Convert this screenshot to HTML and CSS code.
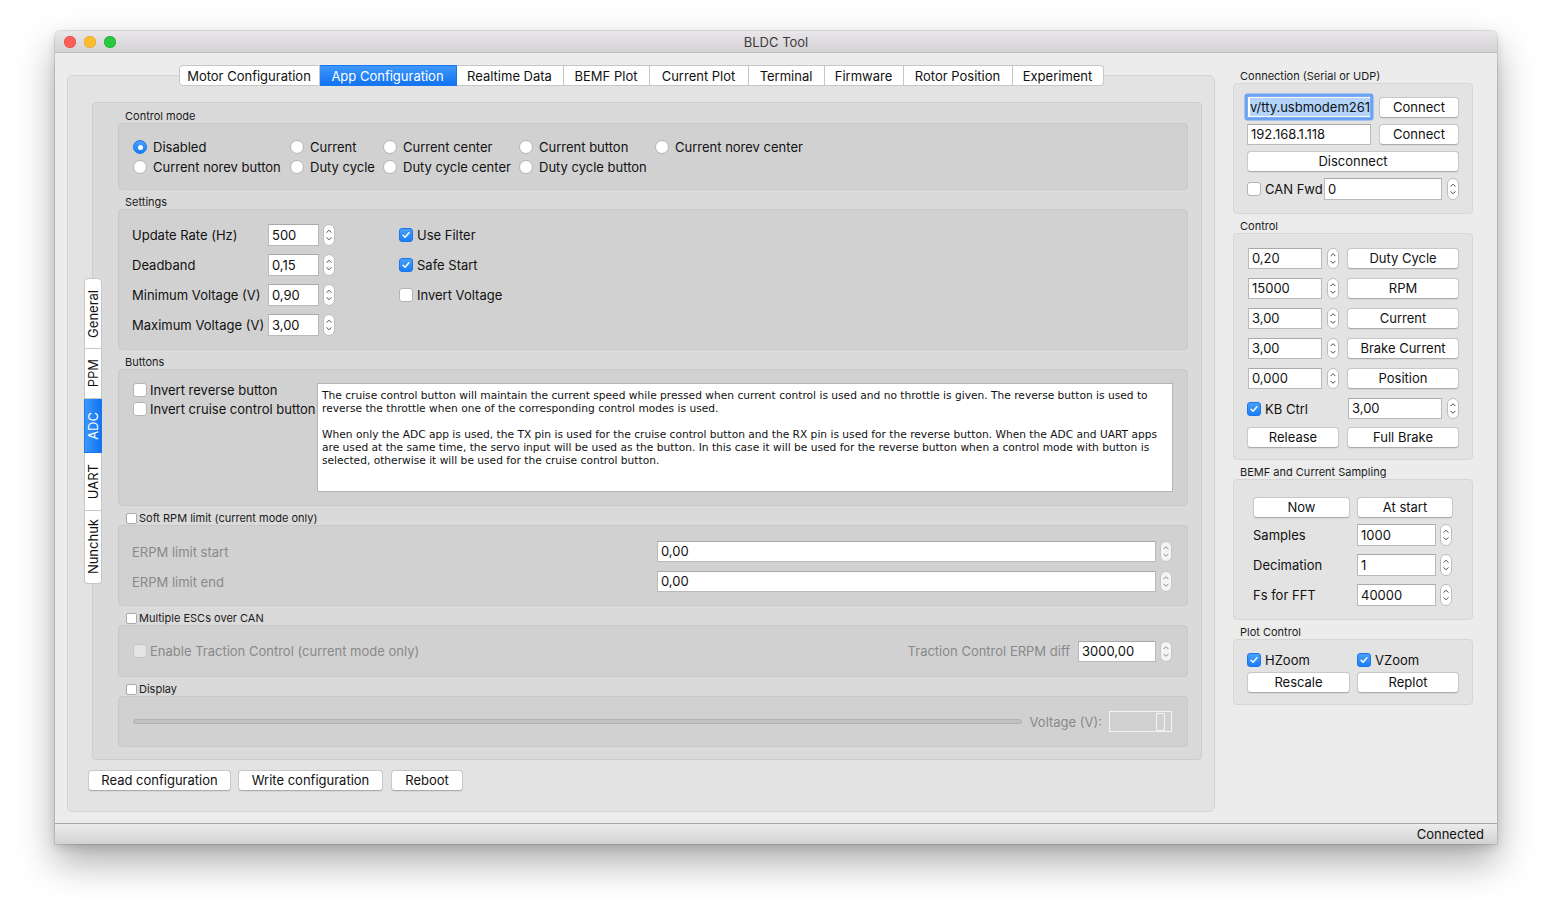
FILE: index.html
```html
<!DOCTYPE html>
<html>
<head>
<meta charset="utf-8">
<title>BLDC Tool</title>
<link rel="stylesheet" href="styles.css">
</head>
<body>
<div class="window">
  <div class="titlebar">
    <div class="lights"><span class="light red"></span><span class="light yellow"></span><span class="light green"></span></div>
    <div class="title">BLDC Tool</div>
    <div></div>
  </div>
  <div class="content">
    <div class="maincol">
      <div class="tabbar">
        <div class="tab">Motor Configuration</div>
        <div class="tab sel">App Configuration</div>
        <div class="tab">Realtime Data</div>
        <div class="tab">BEMF Plot</div>
        <div class="tab">Current Plot</div>
        <div class="tab">Terminal</div>
        <div class="tab">Firmware</div>
        <div class="tab">Rotor Position</div>
        <div class="tab">Experiment</div>
      </div>
      <div class="mainpane">
        <div class="inner">
          <div class="vtabs">
            <div class="vtab"><span>General</span></div>
            <div class="vtab"><span>PPM</span></div>
            <div class="vtab sel"><span>ADC</span></div>
            <div class="vtab"><span>UART</span></div>
            <div class="vtab"><span>Nunchuk</span></div>
          </div>
          <div class="innerpane">
            <div class="gtitle">Control mode</div>
            <div class="gbox cm">
              <label class="opt"><span class="radio on"></span>Disabled</label>
              <label class="opt"><span class="radio"></span>Current</label>
              <label class="opt"><span class="radio"></span>Current center</label>
              <label class="opt"><span class="radio"></span>Current button</label>
              <label class="opt"><span class="radio"></span>Current norev center</label>
              <label class="opt"><span class="radio"></span>Current norev button</label>
              <label class="opt"><span class="radio"></span>Duty cycle</label>
              <label class="opt"><span class="radio"></span>Duty cycle center</label>
              <label class="opt"><span class="radio"></span>Duty cycle button</label>
            </div>

            <div class="gtitle">Settings</div>
            <div class="gbox settings">
              <div class="lbl">Update Rate (Hz)</div>
              <div class="spinbox sb-set"><div class="field">500</div><svg class="spin" width="12" height="22" viewBox="0 0 12 22"><rect x=".5" y=".5" width="11" height="21" rx="5.5" fill="#fff" stroke="#bcbcbc"/><path d="M3.6 8.6 6 6.2l2.4 2.4M3.6 13.4 6 15.8l2.4-2.4" fill="none" stroke="#4a4a4a"/></svg></div>
              <label class="opt"><span class="cb on"><svg width="14" height="14" viewBox="0 0 14 14"><path d="M3.6 7.3l2.3 2.4 4.5-5.3" fill="none" stroke="#fff" stroke-width="1.7" stroke-linecap="round" stroke-linejoin="round"/></svg></span>Use Filter</label>
              <div class="lbl">Deadband</div>
              <div class="spinbox sb-set"><div class="field">0,15</div><svg class="spin" width="12" height="22" viewBox="0 0 12 22"><rect x=".5" y=".5" width="11" height="21" rx="5.5" fill="#fff" stroke="#bcbcbc"/><path d="M3.6 8.6 6 6.2l2.4 2.4M3.6 13.4 6 15.8l2.4-2.4" fill="none" stroke="#4a4a4a"/></svg></div>
              <label class="opt"><span class="cb on"><svg width="14" height="14" viewBox="0 0 14 14"><path d="M3.6 7.3l2.3 2.4 4.5-5.3" fill="none" stroke="#fff" stroke-width="1.7" stroke-linecap="round" stroke-linejoin="round"/></svg></span>Safe Start</label>
              <div class="lbl">Minimum Voltage (V)</div>
              <div class="spinbox sb-set"><div class="field">0,90</div><svg class="spin" width="12" height="22" viewBox="0 0 12 22"><rect x=".5" y=".5" width="11" height="21" rx="5.5" fill="#fff" stroke="#bcbcbc"/><path d="M3.6 8.6 6 6.2l2.4 2.4M3.6 13.4 6 15.8l2.4-2.4" fill="none" stroke="#4a4a4a"/></svg></div>
              <label class="opt"><span class="cb"></span>Invert Voltage</label>
              <div class="lbl">Maximum Voltage (V)</div>
              <div class="spinbox sb-set"><div class="field">3,00</div><svg class="spin" width="12" height="22" viewBox="0 0 12 22"><rect x=".5" y=".5" width="11" height="21" rx="5.5" fill="#fff" stroke="#bcbcbc"/><path d="M3.6 8.6 6 6.2l2.4 2.4M3.6 13.4 6 15.8l2.4-2.4" fill="none" stroke="#4a4a4a"/></svg></div>
              <div></div>
            </div>

            <div class="gtitle">Buttons</div>
            <div class="gbox buttons">
              <div class="btnchecks">
                <label class="opt"><span class="cb"></span>Invert reverse button</label>
                <label class="opt"><span class="cb"></span>Invert cruise control button</label>
              </div>
              <div class="textarea">The cruise control button will maintain the current speed while pressed when current control is used and no throttle is given. The reverse button is used to<br>reverse the throttle when one of the corresponding control modes is used.<br><br>When only the ADC app is used, the TX pin is used for the cruise control button and the RX pin is used for the reverse button. When the ADC and UART apps<br>are used at the same time, the servo input will be used as the button. In this case it will be used for the reverse button when a control mode with button is<br>selected, otherwise it will be used for the cruise control button.</div>
            </div>

            <div class="gtitle chk"><span class="cbs"></span>Soft RPM limit (current mode only)</div>
            <div class="gbox soft">
              <div class="lbl dis">ERPM limit start</div>
              <div class="spinbox"><div class="field wide">0,00</div><svg class="spin" width="12" height="21" viewBox="0 0 12 21"><rect x=".5" y=".5" width="11" height="20" rx="5.5" fill="#f4f4f4" stroke="#c6c6c6"/><path d="M3.6 8.1 6 5.7l2.4 2.4M3.6 12.9 6 15.3l2.4-2.4" fill="none" stroke="#8a8a8a"/></svg></div>
              <div class="lbl dis">ERPM limit end</div>
              <div class="spinbox"><div class="field wide">0,00</div><svg class="spin" width="12" height="21" viewBox="0 0 12 21"><rect x=".5" y=".5" width="11" height="20" rx="5.5" fill="#f4f4f4" stroke="#c6c6c6"/><path d="M3.6 8.1 6 5.7l2.4 2.4M3.6 12.9 6 15.3l2.4-2.4" fill="none" stroke="#8a8a8a"/></svg></div>
            </div>

            <div class="gtitle chk"><span class="cbs"></span>Multiple ESCs over CAN</div>
            <div class="gbox multi">
              <label class="opt dis"><span class="cb dis"></span>Enable Traction Control (current mode only)</label>
              <div class="tcright">
                <span class="dis">Traction Control ERPM diff</span>
                <div class="spinbox"><div class="field tc">3000,00</div><svg class="spin" width="12" height="21" viewBox="0 0 12 21"><rect x=".5" y=".5" width="11" height="20" rx="5.5" fill="#f4f4f4" stroke="#c6c6c6"/><path d="M3.6 8.1 6 5.7l2.4 2.4M3.6 12.9 6 15.3l2.4-2.4" fill="none" stroke="#8a8a8a"/></svg></div>
              </div>
            </div>

            <div class="gtitle chk"><span class="cbs"></span>Display</div>
            <div class="gbox display">
              <div class="track"></div>
              <span class="dis vlabel">Voltage (V):</span>
              <div class="lcd"><div class="lcdseg"></div></div>
            </div>
          </div>
        </div>
        <div class="bottombtns">
          <div class="btn b-read">Read configuration</div>
          <div class="btn b-write">Write configuration</div>
          <div class="btn b-reboot">Reboot</div>
        </div>
      </div>
    </div>

    <div class="side">
      <div class="stitle first">Connection (Serial or UDP)</div>
      <div class="sbox conn">
        <div class="row r-c1">
          <div class="field focus"><span class="selected">v/tty.usbmodem261</span></div>
          <div class="btn">Connect</div>
        </div>
        <div class="row r-c2">
          <div class="field ip">192.168.1.118</div>
          <div class="btn">Connect</div>
        </div>
        <div class="btn full">Disconnect</div>
        <div class="row r-can">
          <label class="opt"><span class="cb"></span>CAN Fwd</label>
          <div class="spinbox"><div class="field canf">0</div><svg class="spin" width="12" height="22" viewBox="0 0 12 22"><rect x=".5" y=".5" width="11" height="21" rx="5.5" fill="#fff" stroke="#bcbcbc"/><path d="M3.6 8.6 6 6.2l2.4 2.4M3.6 13.4 6 15.8l2.4-2.4" fill="none" stroke="#4a4a4a"/></svg></div>
        </div>
      </div>

      <div class="stitle">Control</div>
      <div class="sbox control">
        <div class="spinbox"><div class="field cf">0,20</div><svg class="spin" width="12" height="21" viewBox="0 0 12 21"><rect x=".5" y=".5" width="11" height="20" rx="5.5" fill="#fff" stroke="#bcbcbc"/><path d="M3.6 8.1 6 5.7l2.4 2.4M3.6 12.9 6 15.3l2.4-2.4" fill="none" stroke="#4a4a4a"/></svg></div>
        <div class="btn">Duty Cycle</div>
        <div class="spinbox"><div class="field cf">15000</div><svg class="spin" width="12" height="21" viewBox="0 0 12 21"><rect x=".5" y=".5" width="11" height="20" rx="5.5" fill="#fff" stroke="#bcbcbc"/><path d="M3.6 8.1 6 5.7l2.4 2.4M3.6 12.9 6 15.3l2.4-2.4" fill="none" stroke="#4a4a4a"/></svg></div>
        <div class="btn">RPM</div>
        <div class="spinbox"><div class="field cf">3,00</div><svg class="spin" width="12" height="21" viewBox="0 0 12 21"><rect x=".5" y=".5" width="11" height="20" rx="5.5" fill="#fff" stroke="#bcbcbc"/><path d="M3.6 8.1 6 5.7l2.4 2.4M3.6 12.9 6 15.3l2.4-2.4" fill="none" stroke="#4a4a4a"/></svg></div>
        <div class="btn">Current</div>
        <div class="spinbox"><div class="field cf">3,00</div><svg class="spin" width="12" height="21" viewBox="0 0 12 21"><rect x=".5" y=".5" width="11" height="20" rx="5.5" fill="#fff" stroke="#bcbcbc"/><path d="M3.6 8.1 6 5.7l2.4 2.4M3.6 12.9 6 15.3l2.4-2.4" fill="none" stroke="#4a4a4a"/></svg></div>
        <div class="btn">Brake Current</div>
        <div class="spinbox"><div class="field cf">0,000</div><svg class="spin" width="12" height="21" viewBox="0 0 12 21"><rect x=".5" y=".5" width="11" height="20" rx="5.5" fill="#fff" stroke="#bcbcbc"/><path d="M3.6 8.1 6 5.7l2.4 2.4M3.6 12.9 6 15.3l2.4-2.4" fill="none" stroke="#4a4a4a"/></svg></div>
        <div class="btn">Position</div>
        <label class="opt"><span class="cb on"><svg width="14" height="14" viewBox="0 0 14 14"><path d="M3.6 7.3l2.3 2.4 4.5-5.3" fill="none" stroke="#fff" stroke-width="1.7" stroke-linecap="round" stroke-linejoin="round"/></svg></span>KB Ctrl</label>
        <div class="spinbox"><div class="field kb">3,00</div><svg class="spin" width="12" height="21" viewBox="0 0 12 21"><rect x=".5" y=".5" width="11" height="20" rx="5.5" fill="#fff" stroke="#bcbcbc"/><path d="M3.6 8.1 6 5.7l2.4 2.4M3.6 12.9 6 15.3l2.4-2.4" fill="none" stroke="#4a4a4a"/></svg></div>
        <div class="btn">Release</div>
        <div class="btn">Full Brake</div>
      </div>

      <div class="stitle">BEMF and Current Sampling</div>
      <div class="sbox bemf">
        <div class="bemf-btns">
          <div class="btn">Now</div>
          <div class="btn">At start</div>
        </div>
        <div class="bemf-grid">
          <div class="lbl">Samples</div>
          <div class="spinbox"><div class="field bf">1000</div><svg class="spin" width="12" height="22" viewBox="0 0 12 22"><rect x=".5" y=".5" width="11" height="21" rx="5.5" fill="#fff" stroke="#bcbcbc"/><path d="M3.6 8.6 6 6.2l2.4 2.4M3.6 13.4 6 15.8l2.4-2.4" fill="none" stroke="#4a4a4a"/></svg></div>
          <div class="lbl">Decimation</div>
          <div class="spinbox"><div class="field bf">1</div><svg class="spin" width="12" height="22" viewBox="0 0 12 22"><rect x=".5" y=".5" width="11" height="21" rx="5.5" fill="#fff" stroke="#bcbcbc"/><path d="M3.6 8.6 6 6.2l2.4 2.4M3.6 13.4 6 15.8l2.4-2.4" fill="none" stroke="#4a4a4a"/></svg></div>
          <div class="lbl">Fs for FFT</div>
          <div class="spinbox"><div class="field bf">40000</div><svg class="spin" width="12" height="22" viewBox="0 0 12 22"><rect x=".5" y=".5" width="11" height="21" rx="5.5" fill="#fff" stroke="#bcbcbc"/><path d="M3.6 8.6 6 6.2l2.4 2.4M3.6 13.4 6 15.8l2.4-2.4" fill="none" stroke="#4a4a4a"/></svg></div>
        </div>
      </div>

      <div class="stitle">Plot Control</div>
      <div class="sbox plot">
        <label class="opt"><span class="cb on"><svg width="14" height="14" viewBox="0 0 14 14"><path d="M3.6 7.3l2.3 2.4 4.5-5.3" fill="none" stroke="#fff" stroke-width="1.7" stroke-linecap="round" stroke-linejoin="round"/></svg></span>HZoom</label>
        <label class="opt"><span class="cb on"><svg width="14" height="14" viewBox="0 0 14 14"><path d="M3.6 7.3l2.3 2.4 4.5-5.3" fill="none" stroke="#fff" stroke-width="1.7" stroke-linecap="round" stroke-linejoin="round"/></svg></span>VZoom</label>
        <div class="btn">Rescale</div>
        <div class="btn">Replot</div>
      </div>
    </div>
  </div>
  <div class="status">Connected</div>
</div>
</body>
</html>
```

FILE: styles.css
```css
* { box-sizing: border-box; margin: 0; padding: 0; }
html, body { background: #ffffff; }
body {
  width: 1552px; height: 924px; overflow: hidden;
  padding: 31px 0 0 55px;
  font-family: Inter, "Liberation Sans", Arial, sans-serif;
  font-size: 13px; color: #111;
}
label { cursor: default; }

.window {
  width: 1442px; height: 813px;
  background: #ececec;
  border-radius: 5px 5px 0 0;
  box-shadow: 0 0 0 1px rgba(0,0,0,0.10), 0 18px 38px rgba(0,0,0,0.33), 0 4px 10px rgba(0,0,0,0.12);
  display: flex; flex-direction: column;
  overflow: hidden;
}

/* title bar */
.titlebar {
  height: 22px; flex: none;
  display: grid; grid-template-columns: 1fr auto 1fr; align-items: center;
  background: linear-gradient(#e9e7e9, #d4d2d4);
  border-bottom: 1px solid #bdbbbd;
}
.lights { display: flex; gap: 8px; padding-left: 9px; }
.light { width: 12px; height: 12px; border-radius: 50%; }
.red { background: #fc5f57; box-shadow: inset 0 0 0 0.5px #de4640; }
.yellow { background: #fdbc2e; box-shadow: inset 0 0 0 0.5px #de9f26; }
.green { background: #28c840; box-shadow: inset 0 0 0 0.5px #1eaa32; }
.title { font-size: 13px; color: #3c3c3c; }

/* content */
.content { height: 770px; flex: none; display: flex; }
.maincol { width: 1160px; padding: 12px 0 0 12px; display: flex; flex-direction: column; }

.tabbar {
  height: 21px; margin-bottom: -11px;
  display: flex; justify-content: center;
  position: relative; z-index: 1;
}
.tab {
  height: 21px; line-height: 20px; text-align: center;
  background: #fff;
  border: 1px solid #c6c6c6; border-left: none;
  color: #111;
  white-space: nowrap;
}
.tab:first-child { border-left: 1px solid #c6c6c6; border-radius: 4px 0 0 4px; }
.tab:last-child { border-radius: 0 4px 4px 0; }
.tab.sel { background: linear-gradient(#3f97fb, #1073f1); color: #fff; border-color: #1a78ef; }
.tab:nth-child(1) { width: 141px; }
.tab:nth-child(2) { width: 137px; }
.tab:nth-child(3) { width: 107px; }
.tab:nth-child(4) { width: 86px; }
.tab:nth-child(5) { width: 99px; }
.tab:nth-child(6) { width: 76px; }
.tab:nth-child(7) { width: 79px; }
.tab:nth-child(8) { width: 109px; }
.tab:nth-child(9) { width: 91px; }

.mainpane {
  width: 1148px; height: 737px;
  background: #e3e3e3;
  border: 1px solid #d4d4d4; border-radius: 5px;
  padding: 26px 12px 0 16px;
}
.inner { height: 658px; display: flex; }

.vtabs {
  width: 18px; align-self: center; margin-right: -10px;
  display: flex; flex-direction: column;
  position: relative; z-index: 1;
}
.vtab {
  width: 18px; background: #fff;
  border: 1px solid #c6c6c6; border-top: none;
  display: flex; align-items: center; justify-content: center;
}
.vtab:first-child { border-top: 1px solid #c6c6c6; border-radius: 4px 4px 0 0; }
.vtab:last-child { border-radius: 0 0 4px 4px; }
.vtab span { writing-mode: vertical-rl; transform: rotate(180deg); line-height: 16px; white-space: nowrap; }
.vtab.sel { background: linear-gradient(90deg, #3f97fb, #1073f1); color: #fff; border-color: #1a78ef; }
.vtab:nth-child(1) { height: 71px; }
.vtab:nth-child(2) { height: 50px; }
.vtab:nth-child(3) { height: 54px; }
.vtab:nth-child(4) { height: 58px; }
.vtab:nth-child(5) { height: 73px; }

.innerpane {
  flex: 1;
  background: #dadada;
  border: 1px solid #cdcdcd; border-radius: 4px;
  padding: 6px 13px 0 25px;
  display: flex; flex-direction: column;
}

.gtitle {
  height: 14px; line-height: 14px; font-size: 11px; color: #1b1b1b;
  padding-left: 7px; margin-top: 5px;
  display: flex; align-items: center;
}
.gtitle:first-child { margin-top: 0; }
.gtitle.chk { padding-left: 8px; gap: 2px; }
.cbs {
  width: 11px; height: 11px; background: #fff;
  border: 1px solid #a9a9a9; border-radius: 2px;
}
.gbox {
  background: #d1d1d1;
  border: 1px solid #c8c8c8; border-radius: 4px;
}

.opt { display: flex; align-items: center; gap: 6px; white-space: nowrap; }
.radio {
  width: 14px; height: 14px; border-radius: 50%; flex: none;
  background: #fff; border: 1px solid #b4b4b4;
  display: flex; align-items: center; justify-content: center;
}
.radio.on { background: linear-gradient(#4aa0fc, #1a7ef5); border-color: #1a75e6; }
.radio.on::after { content: ""; width: 5px; height: 5px; border-radius: 50%; background: #fff; }
.cb {
  width: 14px; height: 14px; border-radius: 3px; flex: none;
  background: #fff; border: 1px solid #b4b4b4;
  display: flex; align-items: center; justify-content: center;
}
.cb svg { display: block; }
.cb.on { background: linear-gradient(#4aa0fc, #1a7ef5); border-color: #1a75e6; }
.cb.dis { background: #e4e4e4; border-color: #c6c6c6; }

.cm {
  height: 67px;
  padding: 13px 15px 0 14px;
  display: grid;
  grid-template-columns: 157px 93px 136px 136px auto;
  grid-auto-rows: 20px;
}

.field {
  height: 22px; background: #fff;
  border: 1px solid #b9b9b9; border-top-color: #a9a9a9;
  padding-left: 3px; line-height: 20px; color: #111;
  white-space: nowrap; overflow: hidden;
}
.spinbox { display: flex; align-items: center; gap: 4px; }
.spin { display: block; flex: none; }

.settings {
  height: 141px;
  padding: 14px 14px 0 13px;
  display: grid;
  grid-template-columns: 136px 131px auto;
  grid-auto-rows: 22px; row-gap: 8px;
  align-items: center;
}
.settings .opt { gap: 4px; }
.sb-set .field { width: 51px; }

.buttons {
  height: 137px;
  padding: 13px 14px 0 14px;
  display: flex;
}
.btnchecks { width: 184px; margin-top: -3px; display: flex; flex-direction: column; }
.btnchecks .opt { height: 19px; gap: 3px; }
.textarea {
  flex: 1; height: 109px;
  background: #fff; border: 1px solid #b4b4b4;
  padding: 5px 4px;
  font-family: "DejaVu Sans", Verdana, sans-serif; font-size: 10.65px; line-height: 13px;
  color: #111; white-space: nowrap; overflow: hidden;
}

.dis { color: #898989; }
.lbl { white-space: nowrap; }

.soft {
  height: 81px;
  padding: 15px 15px 0 13px;
  display: grid;
  grid-template-columns: 525px 1fr;
  grid-auto-rows: 21px; row-gap: 9px;
  align-items: center;
}
.soft .field, .multi .field { height: 21px; line-height: 19px; }
.field.wide { flex: 1; }

.multi {
  height: 52px;
  padding: 0 15px 0 14px;
  display: flex; align-items: center;
}
.multi .opt { gap: 3px; }
.tcright { margin-left: auto; display: flex; align-items: center; gap: 8px; }
.field.tc { width: 78px; }

.display {
  height: 51px;
  padding: 0 15px 0 14px;
  display: flex; align-items: center;
}
.track {
  flex: 1; height: 5px; border-radius: 3px;
  background: #c2c2c2; border: 1px solid #b2b2b2;
}
.vlabel { margin-left: 8px; white-space: nowrap; }
.lcd {
  width: 63px; height: 21px; margin-left: 7px;
  border: 1px solid #f3f3f3;
  display: flex; justify-content: flex-end; padding: 1px 6px 0 0;
}
.lcdseg { width: 9px; height: 18px; border: 1px solid #f3f3f3; }

.btn {
  height: 21px; line-height: 19px; text-align: center;
  background: #fff;
  border: 1px solid #c8c8c8; border-bottom-color: #acacac;
  border-radius: 4px;
  box-shadow: 0 0.5px 1px rgba(0,0,0,0.06);
  white-space: nowrap; color: #111;
}
.bottombtns { margin: 10px 0 0 4px; display: flex; }
.b-read { width: 143px; }
.b-write { width: 145px; margin-left: 7px; }
.b-reboot { width: 72px; margin-left: 8px; }

/* side */
.side { width: 240px; margin-left: 18px; padding-top: 16px; display: flex; flex-direction: column; }
.stitle {
  height: 14px; line-height: 14px; font-size: 11px; color: #1b1b1b;
  padding-left: 7px; margin-top: 5px;
}
.stitle.first { margin-top: 0; }
.sbox {
  background: #e3e3e3;
  border: 1px solid #d6d6d6; border-radius: 4px;
}
.conn {
  height: 131px;
  padding: 12px 13px 0 13px;
  display: flex; flex-direction: column; gap: 6px;
}
.conn .row { display: flex; align-items: center; justify-content: space-between; }
.conn .btn { width: 80px; }
.conn .btn.full { width: 212px; }
.field.focus {
  width: 124px; height: 22px;
  border: 1px solid #7eaef0;
  box-shadow: 0 0 0 2.5px #6aa3f3;
  border-radius: 1px;
  padding-left: 2px;
}
.selected { background: #b3d5fd; padding: 1px 0; }
.field.ip { width: 124px; height: 21px; line-height: 19px; }
.r-can .opt { gap: 4px; }
.r-can .spinbox { gap: 5px; }
.field.canf { width: 118px; height: 22px; }

.control {
  height: 227px;
  padding: 14px 13px 0 13px;
  display: grid;
  grid-template-columns: 92px 112px;
  column-gap: 8px;
  grid-template-rows: repeat(6, 21px) 21px;
  row-gap: 9px;
  align-items: center;
}
.control .spinbox { padding-left: 1px; gap: 5px; }
.field.cf { width: 74px; height: 21px; line-height: 19px; }
.control .opt { gap: 4px; }
.field.kb { width: 95px; height: 21px; line-height: 19px; }
.control .btn:nth-last-child(2), .control .btn:last-child { margin-top: -2px; }

.bemf {
  height: 141px;
  padding: 17px 19px 0 19px;
  display: flex; flex-direction: column;
}
.bemf-btns { display: grid; grid-template-columns: 97px 96px; column-gap: 7px; margin-bottom: 6px; }
.bemf-grid {
  display: grid; grid-template-columns: 104px 96px;
  grid-auto-rows: 22px; row-gap: 8px; align-items: center;
}
.field.bf { width: 79px; height: 22px; }

.plot {
  height: 66px;
  padding: 13px 13px 0 13px;
  display: grid;
  grid-template-columns: 103px 102px;
  column-gap: 7px;
  grid-template-rows: 14px 20px;
  row-gap: 5px;
}
.plot .opt { gap: 4px; }

/* status */
.status {
  height: 21px; flex: none;
  border-top: 1px solid #a6a6a6;
  background: linear-gradient(#ececec, #d2d2d2);
  text-align: right; padding-right: 13px; line-height: 20px;
  color: #111;
}
```
